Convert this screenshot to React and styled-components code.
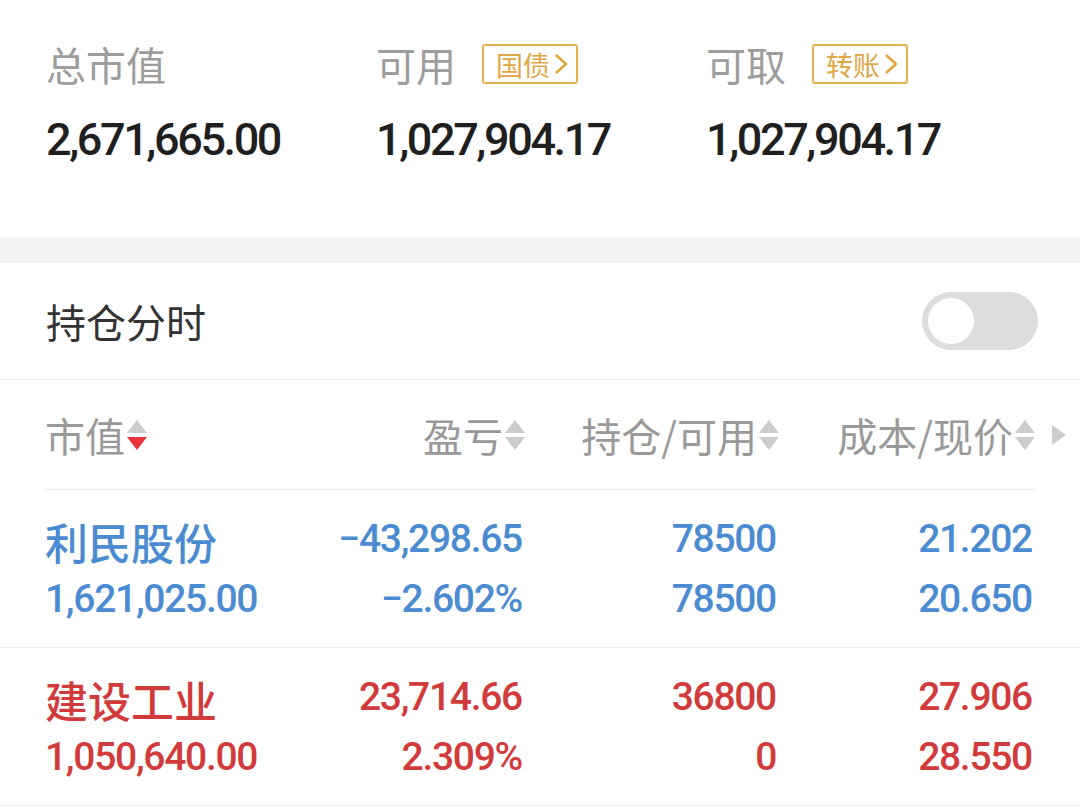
import React from 'react'
import styled, { createGlobalStyle } from 'styled-components'

const NUM = `Roboto, "Liberation Sans", sans-serif`
const CJK = `"Noto Sans CJK SC", "Noto Sans", sans-serif`

const GlobalStyle = createGlobalStyle`
body{
  margin:0;
  background:#fff;
  font-family:${CJK};
}
`

const summary = [
  { title: '总市值', value: '2,671,665.00' },
  { title: '可用', value: '1,027,904.17', badge: '国债' },
  { title: '可取', value: '1,027,904.17', badge: '转账' },
]

const holdings = [
  {
    name: '利民股份', mv: '1,621,025.00', pl: '−43,298.65', pct: '−2.602%',
    pos: '78500', avail: '78500', cost: '21.202', price: '20.650', up: false,
  },
  {
    name: '建设工业', mv: '1,050,640.00', pl: '23,714.66', pct: '2.309%',
    pos: '36800', avail: '0', cost: '27.906', price: '28.550', up: true,
  },
]

function SortIcon({active}){
  return(
    <svg width="20" height="32" viewBox="0 0 20 32">
      <polygon points="0,14 10,1 20,14" fill="#cccccc"/>
      <polygon points="0,18 20,18 10,31" fill={active ? '#e8323c' : '#cccccc'}/>
    </svg>
  )
}

function Chevron(){
  return(
    <svg width="16" height="22" viewBox="0 0 16 22">
      <polyline points="3,2 13,11 3,20" fill="none" stroke="#e3a63e" strokeWidth="2.6" strokeLinejoin="round"/>
    </svg>
  )
}

export default function App(){
  return(
    <>
    <GlobalStyle/>
    <Page>
      <Summary>
        {summary.map((s,i)=>
          <SumCol key={i}>
            <SumLabel>
              {s.title}
              {s.badge && <Badge>{s.badge}<Chevron/></Badge>}
            </SumLabel>
            <SumValue>{s.value}</SumValue>
          </SumCol>
        )}
      </Summary>
      <Band/>
      <ToggleRow>
        <ToggleTitle>持仓分时</ToggleTitle>
        <Switch><Knob/></Switch>
      </ToggleRow>
      <HeadRow>
        <HeadCell>市值<SortIcon active/></HeadCell>
        <HeadCell right>盈亏<SortIcon/></HeadCell>
        <HeadCell right>持仓/可用<SortIcon/></HeadCell>
        <HeadCell right>成本/现价<SortIcon/></HeadCell>
        <More>
          <svg width="14" height="20" viewBox="0 0 14 20"><polygon points="0,0 14,10 0,20" fill="#cccccc"/></svg>
        </More>
      </HeadRow>
      {holdings.map((h,i)=>
        <Row key={i} up={h.up}>
          <Cell>
            <Name>{h.name}</Name>
            <Num>{h.mv}</Num>
          </Cell>
          <Cell right>
            <Num>{h.pl}</Num>
            <Num>{h.pct}</Num>
          </Cell>
          <Cell right>
            <Num>{h.pos}</Num>
            <Num>{h.avail}</Num>
          </Cell>
          <Cell right>
            <Num>{h.cost}</Num>
            <Num>{h.price}</Num>
          </Cell>
        </Row>
      )}
    </Page>
    </>
  )
}

const Page = styled.div`
width:1080px;
background:#fff;
`

const Summary = styled.div`
display:grid;
grid-template-columns: 330px 330px 1fr;
padding: 44px 0 0 46px;
box-sizing:border-box;
height:237px;
`

const SumCol = styled.div`
display:flex;
flex-direction:column;
`

const SumLabel = styled.div`
display:flex;
align-items:center;
gap:26px;
height:40px;
font-size:40px;
color:#9d9d9d;
`

const Badge = styled.span`
display:flex;
align-items:center;
box-sizing:border-box;
height:40px;
padding:0 7px 0 12px;
border:2.5px solid #e9b14c;
border-radius:3px;
font-size:27px;
color:#e0a544;
gap:3px;
`

const SumValue = styled.div`
margin-top:33px;
font-family:${NUM};
font-size:45px;
font-weight:500;
letter-spacing:-2.4px;
line-height:46px;
color:#1f1f1f;
`

const Band = styled.div`
height:26px;
background:#f4f4f4;
`

const ToggleRow = styled.div`
display:flex;
align-items:center;
justify-content:space-between;
height:116px;
padding:0 42px 0 46px;
border-bottom:1px solid #eeeeee;
`

const ToggleTitle = styled.span`
font-size:40px;
color:#333;
`

const Switch = styled.div`
display:flex;
align-items:center;
width:116px;
height:58px;
border-radius:29px;
background:#dddddd;
padding:0 6px;
box-sizing:border-box;
`

const Knob = styled.div`
width:46px;
height:46px;
border-radius:50%;
background:#fff;
`

const grid = `
display:grid;
grid-template-columns: 250px 228px 254px 256px 1fr;
padding-left:45px;
`

const HeadRow = styled.div`
${grid}
align-items:center;
height:110px;
position:relative;
&::after{
  content:'';
  position:absolute;
  left:45px;
  right:45px;
  bottom:0;
  height:1px;
  background:#eaeaea;
}
`

const HeadCell = styled.div`
display:flex;
align-items:center;
justify-content:${p=>p.right ? 'flex-end' : 'flex-start'};
gap:2px;
font-size:40px;
color:#999;
margin-right:${p=>p.right ? '-2px' : '0'};
`

const More = styled.div`
display:flex;
padding-left:19px;
`

const Row = styled.div`
${grid}
align-content:center;
height:157px;
border-bottom:1px solid #eeeeee;
color:${p=>p.up ? '#d23b3b' : '#4b8bd1'};
`

const Cell = styled.div`
display:flex;
flex-direction:column;
align-items:${p=>p.right ? 'flex-end' : 'flex-start'};
gap:10px;
`

const Name = styled.div`
font-size:43px;
font-weight:500;
line-height:50px;
margin-top:2px;
margin-bottom:-2px;
`

const Num = styled.div`
font-family:${NUM};
font-size:39px;
font-weight:500;
letter-spacing:-1.3px;
line-height:50px;
margin-right:1px;
`
